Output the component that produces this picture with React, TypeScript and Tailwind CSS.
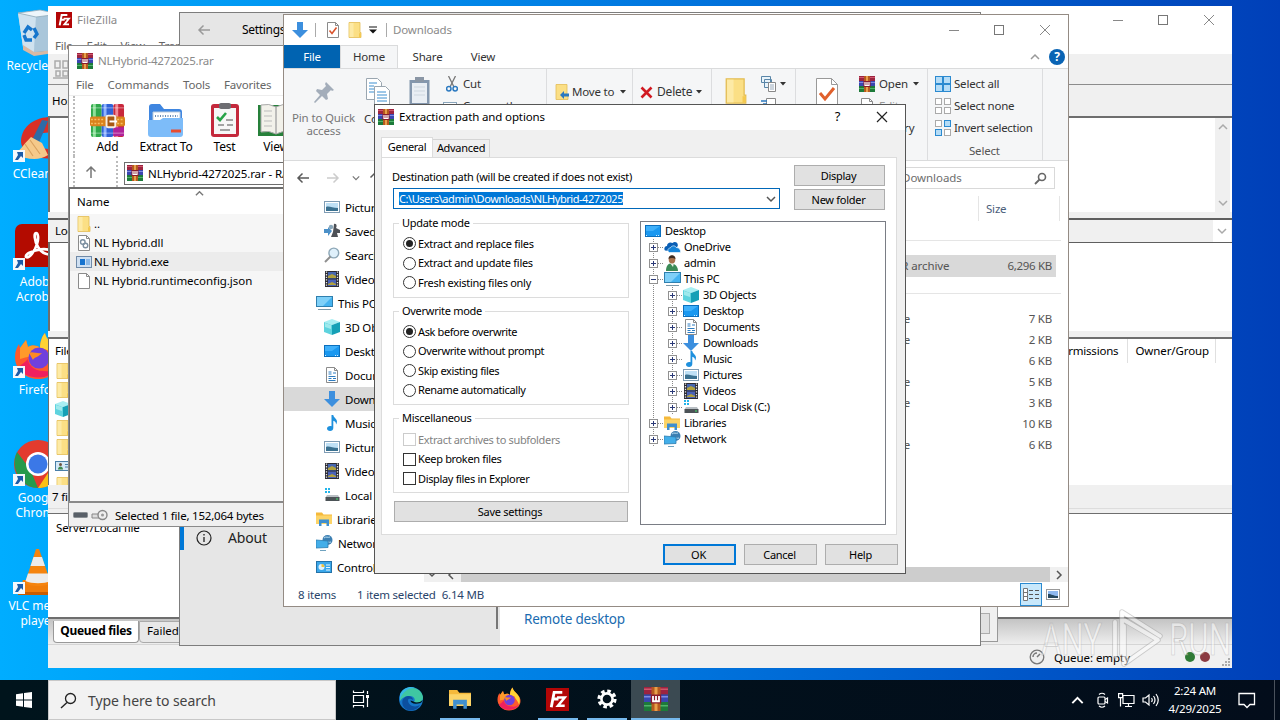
import { ReactNode } from 'react';

type IconProps = { s?: number };

/* ---------- Icons ---------- */

function RarIcon({ s = 16 }: IconProps) {
  return (
    <svg width={s} height={s} viewBox="0 0 16 16" className="shrink-0">
      <rect x="0" y="0" width="16" height="5" fill="#9c2440" />
      <rect x="0" y="1" width="16" height="1" fill="#d0566c" />
      <rect x="0" y="5" width="16" height="5" fill="#3a46b0" />
      <rect x="0" y="6" width="16" height="1" fill="#7f8ae0" />
      <rect x="0" y="10" width="16" height="6" fill="#1d7a3a" />
      <rect x="0" y="12" width="16" height="1" fill="#4fb46a" />
      <rect x="5" y="0" width="6" height="16" fill="#b5591f" />
      <rect x="7" y="0" width="2" height="16" fill="#e8a04a" />
      <rect x="4.5" y="5" width="7" height="6" fill="#8b1b2b" />
      <path d="M6 6v3.5h4V6M8 6v3" fill="none" stroke="#fff" strokeWidth="1.2" />
    </svg>
  );
}

function BooksIcon({ s = 36 }: IconProps) {
  return (
    <svg width={s} height={s} viewBox="0 0 36 36" className="shrink-0">
      <rect x="1" y="1" width="11" height="34" rx="2" fill="#2fa84a" />
      <rect x="3" y="1" width="3" height="34" fill="#8ee09a" />
      <rect x="12" y="1" width="12" height="34" rx="2" fill="#2f62d8" />
      <rect x="14" y="1" width="3" height="34" fill="#8fb4ff" />
      <rect x="24" y="1" width="11" height="34" rx="2" fill="#c8283c" />
      <rect x="26" y="1" width="3" height="34" fill="#f08a98" />
      <path d="M24 25h11v9H24z" fill="#b0229a" />
      <path d="M1 5h34M1 31h34" stroke="#ffffff" strokeOpacity=".45" />
      <rect x="0" y="14" width="36" height="10" rx="2" fill="#d9821c" />
      <path d="M1 17h14M1 21h14M28 17h7M28 21h7" stroke="#f7c062" strokeWidth="1.5" strokeDasharray="2 1.5" />
      <rect x="17" y="13" width="9" height="12" rx="1.5" fill="#a85812" stroke="#f6eee2" strokeWidth="2" />
      <path d="M20 19h8" stroke="#fff" strokeWidth="2" />
    </svg>
  );
}

function Folder({ s = 16 }: IconProps) {
  return (
    <svg width={s} height={s} viewBox="0 0 16 16" className="shrink-0">
      <path d="M2 .5h11v10h1v5H2z" fill="#fbdf85" stroke="#e3bd55" strokeWidth=".8" />
      <path d="M12 15.2v-4h2v4z" fill="#f4c94f" />
      <path d="M2.5 1h4v14h-4z" fill="#fdeaa6" />
    </svg>
  );
}

function FileDoc({ kind = 'blank' }: { kind?: string }) {
  return (
    <svg width="16" height="16" viewBox="0 0 16 16" className="shrink-0">
      <path d="M2.5.5h8l3 3v12h-11z" fill="#fff" stroke="#8b8b8b" />
      <path d="M10.5.5v3h3" fill="none" stroke="#8b8b8b" />
      {kind === 'dll' && (
        <>
          <circle cx="6.8" cy="7" r="2.3" fill="none" stroke="#7b8fa0" strokeWidth="1.4" />
          <circle cx="9.5" cy="10.5" r="2.3" fill="none" stroke="#7b8fa0" strokeWidth="1.4" />
        </>
      )}
      {kind === 'check' && <path d="M4.5 8.5l2.5 3 4.5-6" fill="none" stroke="#d9532c" strokeWidth="1.6" />}
      {kind === 'text' && <path d="M4.5 5h3M4.5 7h3M9 6h3M4.5 9.5h7M4.5 11.5h3M9 11.5h3M4.5 13.5h7" stroke="#2e7cc0" />}
    </svg>
  );
}

function ExeIcon() {
  return (
    <svg width="16" height="16" viewBox="0 0 16 16" className="shrink-0">
      <rect x=".5" y="2.5" width="15" height="11" fill="#cfe0f2" stroke="#6f8aa8" />
      <rect x="4" y="5" width="5" height="6" fill="#1673cf" />
      <path d="M10 6h4M10 8h4M10 10h4" stroke="#4a92dc" />
    </svg>
  );
}

function ContactIcon() {
  return (
    <svg width="16" height="16" viewBox="0 0 16 16" className="shrink-0">
      <rect x=".5" y="3.5" width="15" height="9" fill="#d4e9f7" stroke="#4a7fa8" />
      <circle cx="5.5" cy="6.5" r="1.5" fill="#6d5440" />
      <path d="M3 11.5c0-4 5-4 5 0z" fill="#3f8c52" />
      <path d="M10 6.5h4M10 9h4" stroke="#4a7fa8" />
    </svg>
  );
}

function DesktopIcon({ s = 16 }: IconProps) {
  return (
    <svg width={s} height={s} viewBox="0 0 16 16" className="shrink-0">
      <rect x=".5" y="2.5" width="15" height="11" fill="#1a98f0" stroke="#0b6fbd" />
      <path d="M1 3h14L8 8H1z" fill="#3fb0fa" />
      <path d="M1 12.5h2M11 12.5h4" stroke="#d4ecff" strokeDasharray="1 1" />
    </svg>
  );
}

function PcIcon() {
  return (
    <svg width="17" height="16" viewBox="0 0 17 16" className="shrink-0">
      <rect x=".5" y="1.5" width="16" height="10" fill="#45b3f0" stroke="#2f7fae" />
      <path d="M1 2h15L7 11H1z" fill="#7fd0f8" />
      <path d="M2 14.5h13" stroke="#7b98a8" />
    </svg>
  );
}

function CubeIcon() {
  return (
    <svg width="16" height="16" viewBox="0 0 16 16" className="shrink-0">
      <path d="M8 0l8 3-8 3-8-3z" fill="#a8eef2" />
      <path d="M0 3l8 3v10l-8-3z" fill="#5ed3de" />
      <path d="M16 3L8 6v10l8-3z" fill="#15a0b6" />
      <path d="M1 4l6 2v4l-6-2z" fill="#9fe9ec" />
    </svg>
  );
}

function DownIcon({ s = 16 }: IconProps) {
  return (
    <svg width={s} height={s} viewBox="0 0 16 16" className="shrink-0">
      <path d="M5 0h6v8h5l-8 8-8-8h5z" fill="#3c8fde" />
    </svg>
  );
}

function MusicIcon() {
  return (
    <svg width="16" height="16" viewBox="0 0 16 16" className="shrink-0">
      <path d="M7.500 0h1.800c.3 3 3.700 3.600 3.700 6.500 0 1.200-.4 2.200-1 3 .2-2.300-1-3.300-2.700-3.800V13c0 1.700-1.400 3-3.200 3C4.300 16 3 15 3 13.600s1.500-2.600 3.200-2.600c.5 0 .9.100 1.300.300z" fill="#1e90dd" />
    </svg>
  );
}

function PictureIcon() {
  return (
    <svg width="16" height="16" viewBox="0 0 16 16" className="shrink-0">
      <rect x=".5" y="2.5" width="15" height="11" fill="#fff" stroke="#7f9cb4" />
      <rect x="2" y="4" width="12" height="8" fill="#bfe0f5" />
      <path d="M2 8c3-1.500 6 1 12 1v3H2z" fill="#3b7190" />
    </svg>
  );
}

function VideoIcon() {
  return (
    <svg width="16" height="16" viewBox="0 0 16 16" className="shrink-0">
      <rect x="1" y="0" width="14" height="16" fill="#2c2c34" />
      <rect x="4" y="1" width="8" height="6.5" fill="#4767b0" />
      <rect x="4" y="8.5" width="8" height="6.5" fill="#4a62b8" />
      <path d="M4 5l4-2 4 2v2H4zM4 13l4-2 4 2v1H4z" fill="#b0a13e" />
      <path d="M2.5.5v15M13.5.5v15" stroke="#e8e8e8" strokeWidth="1.3" strokeDasharray="1.3 1.3" />
    </svg>
  );
}

function DiskIcon() {
  return (
    <svg width="16" height="16" viewBox="0 0 16 16" className="shrink-0">
      <path d="M1 1h2v2H1zM4 1h2v2H4zM1 4h2v2H1zM4 4h2v2H4z" fill="#22b4ea" />
      <path d="M3 8h11l1.500 2.500h-14z" fill="#b9bfc4" />
      <rect x="1.5" y="10" width="14" height="4" fill="#4c5357" />
      <rect x="12" y="11.5" width="2" height="1" fill="#3fe36b" />
    </svg>
  );
}

function LibraryIcon({ s = 16 }: IconProps) {
  return (
    <svg width={s} height={s} viewBox="0 0 16 16" className="shrink-0">
      <path d="M0 1.500h6l1.500 2H16V13H0z" fill="#f5b93b" />
      <path d="M0 4.500h16V13H0z" fill="#fcd468" />
      <path d="M3 8.500h10V15h-2.500v-3h-5v3H3z" fill="#3f8fcf" />
    </svg>
  );
}

function NetworkIcon() {
  return (
    <svg width="17" height="16" viewBox="0 0 17 16" className="shrink-0">
      <circle cx="11.5" cy="5" r="5" fill="#3c7fb2" />
      <path d="M8 3c2-2 4 0 6-1M9 7c3-1 4 1 6 0" stroke="#b9def2" fill="none" />
      <path d="M0 5l12 1v6.500L0 13z" fill="#43aee9" stroke="#2b7cb0" strokeWidth=".8" />
      <path d="M4 15.500h6" stroke="#6fa2bf" />
    </svg>
  );
}

function ControlIcon() {
  return (
    <svg width="16" height="16" viewBox="0 0 16 16" className="shrink-0">
      <rect x=".5" y="2.5" width="15" height="11" fill="#3aa7ea" stroke="#2472a8" />
      <circle cx="5.5" cy="8" r="3" fill="#dff2ff" />
      <path d="M5.500 8V5a3 3 0 013 3z" fill="#f2c13a" />
      <path d="M10 6h4M10 8.500h4M10 11h4" stroke="#e8f6ff" />
    </svg>
  );
}

function OneDriveIcon() {
  return (
    <svg width="17" height="16" viewBox="0 0 17 16" className="shrink-0">
      <path d="M1 11.500C-.5 9.500.8 7 3 7c0-3 3-4.500 5.500-3C11 1.500 15 4 13.500 7.500L6 12z" fill="#0a5fb5" />
      <path d="M5.500 13.500c-2.500-1-2-4.500.8-4.500 1-2.500 4.700-3 6-.5 2.500 0 4.700 2 4.200 5z" fill="#1483d8" stroke="#fff" strokeWidth=".6" />
    </svg>
  );
}

function UserIcon() {
  return (
    <svg width="16" height="16" viewBox="0 0 16 16" className="shrink-0">
      <path d="M2 16c0-5 2-7.500 5-7.500 4 0 7 3 7 7.500z" fill="#3c8b57" />
      <path d="M6 8h4l-1 4z" fill="#eef3ea" />
      <ellipse cx="8" cy="4.5" rx="3.3" ry="4" fill="#a8714c" />
      <path d="M4.500 4c0-5 7-5 7 0-2-1.500-5-1.500-7 0z" fill="#3e2c22" />
    </svg>
  );
}

function SavedIcon() {
  return (
    <svg width="16" height="16" viewBox="0 0 16 16" className="shrink-0">
      <path d="M0 6h4V4l4 4-4 5v-3H0z" fill="#4b90c8" />
      <path d="M10 1c3-1 3 3 2 4l4 2v3h-3l1 4H7l2-5z" fill="#4d5157" />
      <circle cx="7" cy="4" r="2.2" fill="#8aa7ba" />
    </svg>
  );
}

function SearchesIcon() {
  return (
    <svg width="16" height="16" viewBox="0 0 16 16" className="shrink-0">
      <circle cx="9.8" cy="6" r="4.9" fill="#dff0fb" stroke="#8da7b7" strokeWidth="1.4" />
      <path d="M6.500 9.500L1 15" stroke="#8f8f8f" strokeWidth="2" />
    </svg>
  );
}

function FirefoxIcon({ s }: { s: number }) {
  return (
    <svg width={s} height={s} viewBox="0 0 48 48" className="shrink-0">
      <path d="M24 47C11 47 1 37 1 25c0-6 2-10 4-13l1 4c2-3 4-5 6-8l2 7c4-2 9-2 12 1 0-6 2-12 5-15 1 6 6 9 10 14 4 4 6 8 6 13 0 11-10 19-23 19z" fill="#ff5a2b" />
      <path d="M31 1c1 6 6 9 10 14 5 6 6 13 3 20-2-7-7-10-9-16-6-3-9-3-9-3 0-6 2-12 5-15z" fill="#ffd334" />
      <path d="M6 16c2-3 4-5 6-8l2 7c4-2 9-2 12 1l-8 6c-3 4-7 3-12 5z" fill="#ff9a2a" />
      <path d="M4 35c6 13 32 15 40 0-3 3-8 5-14 4-12 0-16-8-16-12-4 4-7 6-10 8z" fill="#f0205f" />
      <circle cx="25" cy="26" r="10.5" fill="#7040dd" />
      <path d="M15 21c3-2 8 1 13 0-3 4-8 4-9 7z" fill="#ff8a22" />
    </svg>
  );
}

function FileZillaIcon({ s }: { s: number }) {
  return (
    <svg width={s} height={s} viewBox="0 0 24 24" className="shrink-0">
      <rect width="24" height="24" fill="#b30606" />
      <path d="M5.500 20L8.500 4.500H17M7 11.500h6" fill="none" stroke="#fff" strokeWidth="3" />
      <path d="M11.500 10h8L12.500 18.500h7" fill="none" stroke="#fff" strokeWidth="2.6" />
    </svg>
  );
}

function RecycleBin() {
  return (
    <svg width="48" height="48" viewBox="0 0 48 48">
      <path d="M4 5l22-3 20 4-5 36-23 2-9-5z" fill="#bcd6e8" />
      <path d="M4 5l18 4-2 35-11-5z" fill="#cfe2ef" />
      <path d="M22 9l24-3-5 36-21 2z" fill="#a9c6da" />
      <path d="M4 5l22-3 20 4-24 3z" fill="#eef6fb" stroke="#8fa9b8" strokeWidth=".8" />
      <path d="M9 37l11 7 21-2-1 3-20 3-11-6z" fill="#d8b9a4" />
      <path d="M10 25l4-6 4 3M20 20l3 6-3 4M18 32h-6l-2-5" fill="none" stroke="#1676cc" strokeWidth="3.4" />
    </svg>
  );
}

function CCleaner() {
  return (
    <svg width="48" height="48" viewBox="0 0 48 48">
      <path d="M46 2C28-2 8 6 7 25c0 12 16 20 39 17V31c-12 4-22 2-24-7 0-7 12-10 24-5z" fill="#d92f26" />
      <path d="M28 4l6 1-10 24-7-3z" fill="#2e6ba6" />
      <path d="M17 21l11 6 6 12c-9 6-20 5-34-1 6-3 9-9 17-17z" fill="#f5c98a" />
      <path d="M11 28l8 12M16 24l10 14" stroke="#d9a260" strokeWidth="1.2" />
    </svg>
  );
}

function Acrobat() {
  return (
    <svg width="48" height="48" viewBox="0 0 48 48">
      <rect x="1" width="47" height="43" rx="7" fill="#b30b00" />
      <path d="M12 33c3 2 9-6 11-13 2-6 1-11-1-11s-2 7 2 14c4 7 12 9 14 6s-7-5-14-3c-6 1-13 4-12 7z" fill="none" stroke="#fff" strokeWidth="2.7" />
    </svg>
  );
}

function Chrome() {
  return (
    <svg width="48" height="48" viewBox="0 0 48 48">
      <circle cx="24" cy="24" r="24" fill="#e33b2e" />
      <path d="M3 12l13 17 8 19C8 48-5 29 3 12z" fill="#259a4b" />
      <path d="M24 48l12-18 2-14h9c4 17-6 32-23 32z" fill="#fbc116" />
      <circle cx="24" cy="24" r="12" fill="#fff" />
      <circle cx="24" cy="24" r="9.5" fill="#3b78e7" />
    </svg>
  );
}

function Vlc() {
  return (
    <svg width="48" height="48" viewBox="0 0 48 48">
      <path d="M9 32h32l5 14H4z" fill="#f07d0a" />
      <path d="M4 44h42v3H4z" fill="#c95c00" />
      <path d="M22 1h3l12 34c-4 4-22 4-26 0z" fill="#f5840f" />
      <path d="M19.500 9h8.500l3 9H16.500zM14 25.500h20l2.500 7.500c-6 3-19 3-25 0z" fill="#ececec" />
    </svg>
  );
}

function Edge() {
  return (
    <svg width="24" height="24" viewBox="0 0 24 24">
      <circle cx="12" cy="12" r="12" fill="#1677c8" />
      <path d="M1 8C4-2 22-2 24 10c0 5-4 7-9 5 2-2 0-6-4-6-5 0-8 2-10 5z" fill="#3fc7a2" />
      <path d="M1 8C4 0 12-1 16 1c-6 0-12 3-15 11z" fill="#35b8e8" />
      <path d="M9 13c0 6 7 8 12 5-3 6-13 8-17 1-2-5 0-9 5-10 3 0 5 2 5 4-2-1-4-2-5 0z" fill="#0c4f9e" />
      <path d="M11.500 13.500c0 2.500 4 4.500 10 2.500 1.500-.8 2-2 2-3-3 3-7 3-9 1.500z" fill="#00141c" />
    </svg>
  );
}

function Gear() {
  return (
    <svg width="22" height="22" viewBox="0 0 22 22">
      <circle cx="11" cy="11" r="8" fill="none" stroke="#fff" strokeWidth="3.2" strokeDasharray="3.6 2.683" />
      <circle cx="11" cy="11" r="5.6" fill="none" stroke="#fff" strokeWidth="2.6" />
    </svg>
  );
}

function Shortcut() {
  return (
    <svg width="12" height="12" viewBox="0 0 12 12" className="absolute bottom-[2px] left-[-1px]">
      <rect width="12" height="12" fill="#f4f8fc" />
      <path d="M4 2h6v6L8 6 5 10H2l3-5z" fill="#1c5ca8" />
    </svg>
  );
}

function Caret() {
  return (
    <svg width="6" height="4" viewBox="0 0 6 4" className="shrink-0">
      <path d="M0 0h6L3 3.500z" fill="#333" />
    </svg>
  );
}

function Chevron({ dir, color = '#555', w = 10 }: { dir: 'up' | 'down' | 'left' | 'right'; color?: string; w?: number }) {
  const paths = { up: 'M1 7l4-4 4 4', down: 'M1 3l4 4 4-4', left: 'M7 1L3 5l4 4', right: 'M3 1l4 4-4 4' };
  return (
    <svg width={w} height={w} viewBox="0 0 10 10" className="shrink-0">
      <path d={paths[dir]} fill="none" stroke={color} strokeWidth="1.5" />
    </svg>
  );
}

function Arrow({ dir = 'left', color = '#5a5a5a' }: { dir?: 'left' | 'right' | 'up'; color?: string }) {
  const paths = { left: 'M13 7H2M6.5 2.5L2 7l4.5 4.5', right: 'M1 7h11M7.5 2.5L12 7l-4.5 4.5', up: 'M7 13V2M2.5 6.5L7 2l4.5 4.5' };
  return (
    <svg width="14" height="14" viewBox="0 0 14 14" className="shrink-0">
      <path d={paths[dir]} fill="none" stroke={color} strokeWidth="1.5" />
    </svg>
  );
}

function CaptionButtons() {
  return (
    <div className="flex items-center gap-[34px]">
      <svg width="12" height="12" viewBox="0 0 12 12"><path d="M2 6.500h10" stroke="#888" /></svg>
      <svg width="12" height="12" viewBox="0 0 12 12"><rect x="1.5" y="1.5" width="9" height="9" fill="none" stroke="#777" /></svg>
      <svg width="12" height="12" viewBox="0 0 12 12"><path d="M1 1l10 10M11 1L1 11" stroke="#888" /></svg>
    </div>
  );
}

/* ---------- Desktop ---------- */

const shortcuts = [
  { label: ['Recycle Bin'], icon: <RecycleBin />, arrow: false },
  { label: ['CCleaner'], icon: <CCleaner />, arrow: true },
  { label: ['Adobe', 'Acrobat'], icon: <Acrobat />, arrow: true },
  { label: ['Firefox'], icon: <FirefoxIcon s={48} />, arrow: true },
  { label: ['Google', 'Chrome'], icon: <Chrome />, arrow: true },
  { label: ['VLC media', 'player'], icon: <Vlc />, arrow: true },
];

function DesktopShortcuts() {
  return (
    <div className="flex w-[76px] flex-col">
      {shortcuts.map((item) => (
        <div key={item.label[0]} className="flex h-[108px] flex-col items-center pt-[8px]">
          <div className="relative h-[48px] w-[48px]">
            {item.icon}
            {item.arrow && <Shortcut />}
          </div>
          <div className="mt-[2px] text-center text-[12px] leading-[15px] whitespace-nowrap text-white">
            {item.label.map((line) => (
              <p key={line}>{line}</p>
            ))}
          </div>
        </div>
      ))}
    </div>
  );
}

/* ---------- FileZilla ---------- */

function FileZillaWindow() {
  return (
    <div className="absolute top-[6px] left-[48px] flex h-[662px] w-[1184px] flex-col bg-[#f0f0f0] text-[11.5px] tracking-[-0.2px]">
      <div className="flex h-[28px] items-center justify-between bg-white pr-[17px] pl-[8px] text-[#8a8a8a]">
        <div className="flex items-center gap-[5px]">
          <FileZillaIcon s={16} />
          <span className="tracking-normal">FileZilla</span>
        </div>
        <CaptionButtons />
      </div>
      <div className="flex h-[20px] items-center gap-[14px] bg-white pt-[4px] pl-[7px] text-[#666]">
        <span>File</span>
        <span>Edit</span>
        <span>View</span>
        <span>Transfer</span>
      </div>
      <div className="flex h-[31px] items-center border-b border-[#8c8c8c] pl-[5px]">
        <svg width="18" height="20" viewBox="0 0 18 20">
          <path d="M2 2h5v7H2zM10 2h5v7h-5zM3 12h4v5H3zM10 12h5v5h-5zM0 19h17" fill="none" stroke="#aaa" strokeWidth="1.5" />
        </svg>
      </div>
      <div className="flex h-[33px] items-center border-b-2 border-[#6e6e6e] pl-[4px] tracking-normal">Host:</div>
      <div className="flex h-[94px] justify-end border-l-2 border-[#6e6e6e] bg-white pr-[2px]">
        <div className="flex w-[15px] flex-col items-center justify-between bg-[#f0f0f0] py-[4px]">
          <Chevron dir="up" color="#aaa" />
          <Chevron dir="down" color="#aaa" />
        </div>
      </div>
      <div className="h-[6px]" />
      <div className="flex h-[25px] items-center justify-between border-t-2 border-b border-[#5f5f5f] pr-px pl-[7px]">
        <span>Local site:</span>
        <div className="flex h-full w-[18px] items-center justify-center bg-white">
          <Chevron dir="down" color="#aaa" />
        </div>
      </div>
      <div className="h-[88px] border-l-2 border-[#6e6e6e] bg-white" />
      <div className="h-[6px]" />
      <div className="flex h-[148px] flex-col overflow-hidden border-t-2 border-l border-[#6e6e6e] bg-white pl-[6px]">
        <div className="flex h-[24px] shrink-0 items-center">
          <span>Filename</span>
          <div className="ml-auto flex h-full items-center pr-[16px]">
            <span className="border-r border-[#e0e0e0] pr-[9px] leading-[24px]">Permissions</span>
            <span className="border-r border-[#e0e0e0] pr-[6px] pl-[7px] leading-[24px] tracking-[-0.1px]">Owner/Group</span>
          </div>
        </div>
        <div className="flex flex-col gap-[3px]">
          <Folder />
          <Folder />
          <CubeIcon />
          <Folder />
          <Folder />
          <ContactIcon />
          <Folder />
        </div>
      </div>
      <div className="flex h-[24px] items-center border-b border-[#ddd] pl-[4px]">7 files</div>
      <div className="h-[4px]" />
      <div className="flex h-[106px] flex-col border-t border-b-2 border-[#6e6e6e] bg-white pt-[5px] pl-[8px] leading-[18px] tracking-[-0.15px]">
        Server/Local file
      </div>
      <div className="flex h-[26px] border-b border-[#d5d5d5] bg-linear-to-b from-[#c4c4c4] to-[#eee] pt-[2px] pl-[5px]">
        <div className="flex h-[22px] w-[86px] items-center justify-center rounded-b-sm border border-t-0 border-[#999] bg-white pb-[2px] text-[12px] font-bold tracking-[-0.3px] whitespace-nowrap">Queued files</div>
        <div className="flex h-[22px] w-[110px] items-center rounded-b-sm border border-[#aaa] bg-[#e8e8e8] pb-[2px] pl-[7px] tracking-normal">Failed</div>
      </div>
      <div className="flex flex-1 items-center justify-end pr-px">
        <svg width="16" height="16" viewBox="0 0 16 16">
          <circle cx="8" cy="8" r="6.8" fill="#eee" stroke="#777" strokeWidth="1.3" />
          <path d="M8 8l3-3M4 8a4 4 0 014-4" stroke="#777" fill="none" strokeWidth="1.5" />
        </svg>
        <span className="mr-[55px] ml-[9px] pt-[2px] tracking-[-0.05px]">Queue: empty</span>
        <span className="mr-[5px] h-[10px] w-[10px] rounded-full bg-[#2f7a35]" />
        <span className="h-[10px] w-[10px] rounded-full bg-[#8b3b42]" />
        <svg width="10" height="10" viewBox="0 0 10 10" className="mb-px ml-[11px] self-end">
          <path d="M7 2h2M4 5h2M7 5h2M1 8h2M4 8h2M7 8h2" stroke="#aaa" strokeWidth="2" />
        </svg>
      </div>
    </div>
  );
}

function Watermark() {
  return (
    <div className="absolute top-[606px] left-[1038px] h-[66px] w-[194px] overflow-hidden opacity-50">
      <svg width="196" height="66" viewBox="0 0 196 66">
        <g fill="none" strokeLinejoin="round" strokeLinecap="round">
          <path d="M77 16v34M84 48V6l38 24M86 20v38l34-24L86 14" stroke="#a5a5a5" strokeWidth="5.5" />
          <path d="M77 16v34M84 48V6l38 24M86 20v38l34-24L86 14" stroke="#fff" strokeWidth="3.8" />
        </g>
        <g fill="#fff" stroke="#a5a5a5" strokeWidth=".7" fontFamily="Roboto, sans-serif" fontWeight="400" fontSize="45">
          <text x="3" y="49" textLength="61" lengthAdjust="spacingAndGlyphs">ANY</text>
          <text x="131" y="49" textLength="62" lengthAdjust="spacingAndGlyphs">RUN</text>
        </g>
      </svg>
    </div>
  );
}

/* ---------- Settings ---------- */

function SettingsWindow() {
  return (
    <>
      <div className="absolute top-[560px] left-[900px] flex h-[82px] w-[98px] items-end justify-end border border-[#999] bg-[#f0f0f0] pr-[7px] pb-[7px]">
        <div className="h-[21px] w-[60px] border border-[#adadad] bg-[#e1e1e1]" />
      </div>
      <div className="absolute top-[12px] left-[179px] flex h-[634px] w-[802px] border border-[#7d7d7d] bg-white">
        <div className="flex w-[320px] flex-col bg-[#e6e6e6]">
          <div className="flex h-[33px] items-center pl-[17px] text-[12px]">
            <Arrow color="#9a9a9a" />
            <span className="ml-[31px] tracking-[-0.3px]">Settings</span>
          </div>
          <div className="mt-[480px] flex h-[24px] items-center border-l-4 border-[#0078d7] pl-[12px] text-[14px] text-[#222]">
            <svg width="16" height="16" viewBox="0 0 16 16">
              <circle cx="8" cy="8" r="7" fill="none" stroke="#222" strokeWidth="1.2" />
              <path d="M8 7v5M8 4v1.500" stroke="#222" strokeWidth="1.3" />
            </svg>
            <span className="mb-px ml-[16px] tracking-[-0.2px]">About</span>
          </div>
          <div className="mt-auto mr-[2px] mb-[16px] h-[40px] w-[2px] self-end bg-[#777]" />
        </div>
        <div className="flex flex-col justify-end pb-[16px] pl-[24px] text-[13.5px] tracking-[-0.2px] text-[#1a6bb0]">Remote desktop</div>
      </div>
    </>
  );
}

/* ---------- WinRAR ---------- */

const rarFiles = [
  { name: '..', icon: <Folder /> },
  { name: 'NL Hybrid.dll', icon: <FileDoc kind="dll" /> },
  { name: 'NL Hybrid.exe', icon: <ExeIcon />, selected: true },
  { name: 'NL Hybrid.runtimeconfig.json', icon: <FileDoc /> },
];

function RarTool({ label, width, children }: { label: string; width: string; children: ReactNode }) {
  return (
    <div className={`flex shrink-0 flex-col items-center whitespace-nowrap ${width}`}>
      {children}
      <span className="leading-[17px] tracking-[-0.2px]">{label}</span>
    </div>
  );
}

function WinRarWindow() {
  return (
    <div className="absolute top-[45px] left-[68px] flex h-[482px] w-[300px] flex-col border border-[#8a8a8a] bg-white text-[11.5px] tracking-[-0.2px]">
      <div className="flex h-[29px] items-center gap-[5px] pl-[8px] text-[#8a8a8a]">
        <RarIcon />
        <span>NLHybrid-4272025.rar</span>
      </div>
      <div className="flex h-[21px] items-center gap-[14px] border-b border-[#eee] pl-[7px] text-[#666]">
        <span>File</span>
        <span className="tracking-[-0.05px]">Commands</span>
        <span>Tools</span>
        <span>Favorites</span>
      </div>
      <div className="ml-[4px] flex h-[60px] overflow-hidden border-l-2 border-dotted border-[#bbb] pt-[7px] text-[12px]">
        <RarTool label="Add" width="w-[65px]"><BooksIcon s={35} /></RarTool>
        <RarTool label="Extract To" width="w-[52px]">
          <svg width="36" height="35" viewBox="0 0 36 35" className="shrink-0">
            <path d="M1 4q0-3 3-3h8l4 5h15q3 0 3 3v20H1z" fill="#3f86e0" />
            <path d="M5 9h27v10H5z" fill="#fff" stroke="#bcd" />
            <path d="M7 13h23" stroke="#6b8db5" strokeWidth="2" strokeDasharray="1 1.5" />
            <path d="M0 17h12l3-2h20v16q0 3-3 3H3q-3 0-3-3z" fill="#7dbcf9" />
            <path d="M23 28h10" stroke="#e84c30" strokeWidth="3" />
          </svg>
        </RarTool>
        <RarTool label="Test" width="w-[65px]">
          <svg width="28" height="35" viewBox="0 0 28 35" className="shrink-0">
            <rect x="0" y="1" width="28" height="33" rx="3" fill="#c4293c" />
            <rect x="3" y="5" width="22" height="26" fill="#f7f7f7" />
            <rect x="8" y="0" width="12" height="6" rx="2" fill="#6d6d72" />
            <path d="M6 14l3 3 6-7" stroke="#27a348" strokeWidth="2.6" fill="none" />
            <path d="M15 17h7M7 22h6M16 22h6M9 27h10" stroke="#888" strokeWidth="1.3" />
          </svg>
        </RarTool>
        <RarTool label="View" width="w-[38px]">
          <svg width="36" height="35" viewBox="0 0 36 35" className="shrink-0">
            <path d="M0 2h36v31H0z" fill="#26803a" />
            <path d="M3 2q8-2 15 2v27q-7-4-15-2zM33 2q-8-2-15 2v27q7-4 15-2z" fill="#f2f1ea" stroke="#aaa" />
            <path d="M6 8h8M6 13h8M6 18h8M6 23h8" stroke="#bbb" />
            <path d="M25 1h5v12l-2.500-3-2.500 3z" fill="#c4293c" />
          </svg>
        </RarTool>
      </div>
      <div className="ml-[4px] flex h-[31px] items-center border-l-2 border-dotted border-[#bbb] pl-[9px]">
        <Arrow dir="up" color="#777" />
        <div className="ml-[18px] h-full border-l-2 border-dotted border-[#bbb]" />
        <div className="mt-[3px] ml-[6px] flex h-[23px] flex-1 items-center gap-[5px] border border-[#6e6e6e] pl-[2px] whitespace-nowrap">
          <RarIcon />
          <span className="pt-px tracking-[-0.1px]">NLHybrid-4272025.rar - RAR archive</span>
        </div>
      </div>
      <div className="flex h-[27px] items-center border-t-2 border-l border-[#6e6e6e] pl-[7px]">
        <span className="tracking-normal">Name</span>
        <span className="mb-[16px] ml-[86px]"><Chevron dir="up" color="#777" w={9} /></span>
      </div>
      <div className="flex flex-1 flex-col border-l border-[#6e6e6e] bg-[#f6f6f6]">
        {rarFiles.map((file) => (
          <div key={file.name} className={`flex h-[19px] items-center pl-[6px] tracking-[-0.05px] ${file.selected ? 'bg-[#ececec]' : ''}`}>
            {file.icon}
            <span className="ml-[2px]">{file.name}</span>
          </div>
        ))}
      </div>
      <div className="flex h-[25px] items-center border-t-2 border-[#8a8a8a] bg-[#f0f0f0] pl-[4px]">
        <svg width="36" height="12" viewBox="0 0 36 12">
          <rect x=".5" y="3.5" width="14" height="5" rx="1" fill="#596068" stroke="#8a9094" />
          <path d="M19 5h8v4h-8z" fill="#ddd" stroke="#888" />
          <circle cx="29.5" cy="6" r="4.5" fill="#eee" stroke="#888" strokeWidth="1.4" />
          <circle cx="29.5" cy="6" r="1.5" fill="#999" />
        </svg>
        <span className="ml-[6px] pt-[2px]">Selected 1 file, 152,064 bytes</span>
      </div>
    </div>
  );
}

/* ---------- Explorer ---------- */

const navItems = [
  { label: 'Pictures', icon: <PictureIcon />, deep: true },
  { label: 'Saved Games', icon: <SavedIcon />, deep: true },
  { label: 'Searches', icon: <SearchesIcon />, deep: true },
  { label: 'Videos', icon: <VideoIcon />, deep: true },
  { label: 'This PC', icon: <PcIcon />, deep: false },
  { label: '3D Objects', icon: <CubeIcon />, deep: true },
  { label: 'Desktop', icon: <DesktopIcon />, deep: true },
  { label: 'Documents', icon: <FileDoc kind="text" />, deep: true },
  { label: 'Downloads', icon: <DownIcon />, deep: true, selected: true },
  { label: 'Music', icon: <MusicIcon />, deep: true },
  { label: 'Pictures', icon: <PictureIcon />, deep: true },
  { label: 'Videos', icon: <VideoIcon />, deep: true },
  { label: 'Local Disk', icon: <DiskIcon />, deep: true },
  { label: 'Libraries', icon: <LibraryIcon />, deep: false },
  { label: 'Network', icon: <NetworkIcon />, deep: false },
  { label: 'Control', icon: <ControlIcon />, deep: false },
];

const fileRows = [
  { type: 'e', size: '7 KB' },
  { type: 'e', size: '2 KB' },
  { type: '', size: '6 KB' },
  { type: 'e', size: '5 KB' },
  { type: 'e', size: '3 KB' },
  { type: '', size: '10 KB' },
  { type: 'e', size: '6 KB' },
];

function SelectIcon({ fills }: { fills: boolean[] }) {
  return (
    <div className={`grid h-[16px] w-[16px] grid-cols-2 ${fills[0] ? 'gap-0' : 'gap-[2px]'}`}>
      {fills.map((on, i) => (
        <div key={i} className={on ? 'border border-[#2b8ad0] bg-[#b5dcf6]' : 'border border-[#aaa] bg-white'} />
      ))}
    </div>
  );
}

function Ribbon() {
  return (
    <div className="flex h-[93px] border-y border-[#dadbdc] bg-[#f5f6f7] whitespace-nowrap text-[#333]">
      <div className="flex w-[79px] flex-col items-center pt-[11px] leading-[13px] tracking-[-0.15px] text-[#777]">
        <svg width="24" height="24" viewBox="0 0 24 24" className="shrink-0">
          <path d="M14 2l8 8-2 1-1-1-4 4 1 5-2 1-4-4-7 7-1-1 6-7-4-4 1-2 5 1 4-4-1-2z" fill="#a3adba" />
        </svg>
        <span className="mt-[7px]">Pin to Quick</span>
        <span>access</span>
      </div>
      <div className="flex w-[34px] flex-col items-center pt-[9px] leading-[13px]">
        <svg width="26" height="30" viewBox="0 0 26 30" className="ml-[-4px] shrink-0">
          <path d="M1.500.5h11l4 4v17h-15z" fill="#fff" stroke="#9aa6b0" />
          <path d="M9.500 8.500h11l4 4v17h-15z" fill="#fff" stroke="#9aa6b0" />
          <path d="M4 5h8M4 8h5M4 11h5M4 14h5M12 14h9M12 17h10M12 20h10M12 23h10" stroke="#3d8fd0" />
        </svg>
        <span className="mt-[4px] ml-[-6px]">Copy</span>
      </div>
      <div className="w-[48px] pt-[8px] pl-[12px]">
        <svg width="21" height="28" viewBox="0 0 21 28">
          <rect x=".5" y="3" width="20" height="26" fill="#8497ae" />
          <rect x="3" y="6" width="15" height="20" fill="#e9eef4" />
          <rect x="6" y="0" width="9" height="5" fill="#8a96a5" />
          <path d="M5 10h11M5 14h11M5 18h11" stroke="#cdd6df" />
        </svg>
      </div>
      <div className="flex w-[102px] flex-col border-r border-[#dcdddf] pt-[4px] pl-px">
        <div className="flex h-[22px] shrink-0 items-center gap-[5px]">
          <svg width="12" height="16" viewBox="0 0 12 16">
            <path d="M2.500 0L8 11M9.500 0L4 11" stroke="#777" strokeWidth="1.3" />
            <circle cx="2.8" cy="12.8" r="2.2" fill="none" stroke="#2b79c0" strokeWidth="1.5" />
            <circle cx="9.2" cy="12.8" r="2.2" fill="none" stroke="#2b79c0" strokeWidth="1.5" />
          </svg>
          <span>Cut</span>
        </div>
        <div className="flex h-[22px] shrink-0 items-center gap-[6px]">
          <svg width="14" height="8" viewBox="0 0 14 8" className="ml-[-3px]"><rect x=".5" y=".5" width="13" height="7" fill="#fff" stroke="#8aa5bb" /></svg>
          <span className="tracking-[-0.1px]">Copy path</span>
        </div>
      </div>
      <div className="flex h-[46px] w-[86px] items-center border-r border-[#dcdddf] pl-[8px]">
        <svg width="16" height="16" viewBox="0 0 16 16" className="shrink-0">
          <path d="M1 .5h11v10h1v5H1z" fill="#fbdf85" stroke="#e3bd55" strokeWidth=".8" />
          <path d="M5 11l4-4v2.500h5v3H9V15z" fill="#2b79c0" />
        </svg>
        <span className="mr-[6px] ml-px">Move to</span>
        <Caret />
      </div>
      <div className="flex h-[46px] w-[79px] items-center border-r border-[#dcdddf] pl-[7px]">
        <svg width="13" height="13" viewBox="0 0 13 13"><path d="M1.500 1.500l10 10M11.500 1.500l-10 10" stroke="#d11a22" strokeWidth="2.6" /></svg>
        <span className="mr-[4px] ml-[4px] text-[12px]">Delete</span>
        <Caret />
      </div>
      <div className="flex w-[84px] border-r border-[#dcdddf] pt-[9px] pl-[11px]">
        <Folder s={26} />
        <div className="mt-[-2px] ml-[12px] flex flex-col gap-[6px]">
          <div className="flex items-center gap-[3px]">
            <svg width="16" height="16" viewBox="0 0 16 16">
              <path d="M.5.5h9v6h-9zM3.500 3.500h7v8h-7z" fill="#e9f4fb" stroke="#5a86a8" />
              <path d="M7.500 6.500h7v9h-7z" fill="#fff" stroke="#888" />
              <path d="M9 9h4M9 11h4M9 13h4" stroke="#9ab" />
            </svg>
            <Caret />
          </div>
          <svg width="16" height="12" viewBox="0 0 16 12"><path d="M5.500.5h9v11h-9z" fill="#fff" stroke="#888" /><path d="M0 3h6M2 6h4" stroke="#2b79c0" strokeWidth="1.6" /></svg>
        </div>
      </div>
      <div className="flex w-[132px] border-r border-[#dcdddf] pt-[4px] pl-[20px]">
        <svg width="22" height="28" viewBox="0 0 22 28" className="mt-[5px] shrink-0">
          <path d="M.5.5h15l6 6v21H.5z" fill="#fff" stroke="#999" />
          <path d="M15.500.5v6h6" fill="none" stroke="#999" />
          <path d="M4 15l5 6 9-11" fill="none" stroke="#e0602c" strokeWidth="3" />
        </svg>
        <div className="ml-[21px] flex flex-col">
          <div className="flex h-[22px] shrink-0 items-center">
            <RarIcon />
            <span className="mr-[5px] ml-[4px]">Open</span>
            <Caret />
          </div>
          <div className="flex h-[22px] shrink-0 items-center gap-[4px] text-[#999]">
            <FileDoc />
            <span>Edit</span>
          </div>
          <div className="flex h-[22px] shrink-0 items-center pl-[18px]">History</div>
        </div>
      </div>
      <div className="flex w-[115px] flex-col border-r border-[#dcdddf] pt-[4px] pl-[7px]">
        <div className="flex h-[22px] shrink-0 items-center gap-[3px]">
          <SelectIcon fills={[true, true, true, true]} />
          <span>Select all</span>
        </div>
        <div className="flex h-[22px] shrink-0 items-center gap-[3px]">
          <SelectIcon fills={[false, false, false, false]} />
          <span>Select none</span>
        </div>
        <div className="flex h-[22px] shrink-0 items-center gap-[3px]">
          <SelectIcon fills={[false, true, true, false]} />
          <span className="tracking-[-0.3px]">Invert selection</span>
        </div>
        <span className="pl-[34px] leading-[24px] text-[#555]">Select</span>
      </div>
    </div>
  );
}

function ExplorerWindow() {
  return (
    <div className="absolute top-[14px] left-[283px] flex h-[593px] w-[786px] flex-col border border-[#948b84] bg-white text-[11.5px] tracking-[-0.2px]">
      <div className="flex h-[30px] items-center pr-[17px] pl-[8px]">
        <DownIcon />
        <div className="ml-[7px] h-[14px] w-px bg-[#aaa]" />
        <span className="ml-[9px]"><FileDoc kind="check" /></span>
        <span className="ml-[6px]"><Folder /></span>
        <svg width="8" height="8" viewBox="0 0 8 8" className="ml-[6px]"><path d="M0 1h8" stroke="#111" /><path d="M0 3.500h8L4 7.500z" fill="#111" /></svg>
        <div className="ml-[9px] h-[14px] w-px bg-[#aaa]" />
        <span className="ml-[6px] tracking-[-0.15px] text-[#8a8a8a]">Downloads</span>
        <div className="ml-auto"><CaptionButtons /></div>
      </div>
      <div className="flex h-[23px] text-[#333]">
        <div className="flex w-[56px] items-center justify-center bg-[#0063b1] text-white">File</div>
        <div className="mb-[-1px] flex w-[58px] items-center justify-center border border-b-0 border-[#dadbdc] bg-[#f5f6f7] pb-px">Home</div>
        <div className="flex w-[59px] items-center justify-center">Share</div>
        <div className="flex w-[52px] items-center justify-center">View</div>
        <div className="ml-auto flex items-center gap-[9px] pr-[3px]">
          <Chevron dir="up" color="#999" />
          <div className="flex h-[16px] w-[16px] items-center justify-center rounded-full bg-[#0a64b4] text-[12px] font-bold text-white">?</div>
        </div>
      </div>
      <Ribbon />
      <div className="flex h-[34px] items-center pr-[13px] pl-[12px]">
        <Arrow />
        <span className="ml-[16px]"><Arrow dir="right" color="#ccc" /></span>
        <span className="ml-[12px]"><Chevron dir="down" color="#777" w={8} /></span>
        <span className="ml-[8px]"><Arrow dir="up" /></span>
        <div className="ml-auto flex h-[22px] w-[205px] items-center justify-between border border-[#d9d9d9] pr-[7px] pl-[12px] text-[#6d6d6d]">
          <span className="tracking-[-0.05px]">Search Downloads</span>
          <svg width="13" height="13" viewBox="0 0 13 13">
            <circle cx="8" cy="5" r="3.5" fill="none" stroke="#666" strokeWidth="1.6" />
            <path d="M5.500 7.500L1 12" stroke="#666" strokeWidth="1.8" />
          </svg>
        </div>
      </div>
      <div className="flex min-h-0 flex-1">
        <div className="flex w-[140px] flex-col overflow-hidden">
          {navItems.map((item, i) => (
            <div
              key={i}
              className={`flex h-[24px] shrink-0 items-center gap-[5px] ${item.deep ? 'pl-[40px]' : 'pl-[32px]'} ${item.selected ? 'bg-[#d9d9d9]' : ''}`}
            >
              {item.icon}
              <span className="pt-px">{item.label}</span>
            </div>
          ))}
        </div>
        <div className="flex w-[16px] items-end justify-center bg-[#f0f0f0] pb-[3px]">
          <Chevron dir="down" />
        </div>
        <div className="flex flex-1 flex-col">
          <div className="mt-px mr-[8px] ml-auto flex h-[25px] w-[82px] items-center border-x border-[#e5e5e5] pl-[7px] text-[#4c607a]">Size</div>
          <div className="mt-[19px] mr-[7px] border-t border-[#e5e5e5]" />
          <div className="mt-[14px] mr-[12px] flex h-[22px] items-center justify-end bg-[#d9d9d9] pr-[4px] text-[#555]">
            <span className="mr-[58px] tracking-[-0.1px]">WinRAR archive</span>
            <span className="tracking-[-0.3px]">6,296 KB</span>
          </div>
          <div className="mt-[16px] mr-[7px] border-t border-[#e5e5e5]" />
          <div className="mt-[14px] flex flex-col pr-[16px] text-[#555]">
            {fileRows.map((row, i) => (
              <div key={i} className="flex h-[21px] items-center justify-end">
                <span>{row.type}</span>
                <span className="w-[142px] text-right">{row.size}</span>
              </div>
            ))}
          </div>
          <div className="mt-auto flex h-[15px] bg-[#f0f0f0]">
            <div className="flex w-[21px] items-center justify-center"><Chevron dir="left" /></div>
            <div className="flex-1 bg-[#cdcdcd]" />
            <div className="flex w-[18px] items-center justify-center"><Chevron dir="right" /></div>
          </div>
        </div>
      </div>
      <div className="flex h-[24px] items-center pr-[8px] pl-[14px] text-[#29446a]">
        <span className="pt-px">8 items</span>
        <span className="ml-[21px] pt-px">1 item selected</span>
        <span className="ml-[6px] pt-px">6.14 MB</span>
        <div className="ml-auto flex h-[23px] w-[22px] items-center justify-center border border-[#2b8ad0] bg-[#c8e8fb]">
          <svg width="16" height="13" viewBox="0 0 16 13">
            <path d="M.5.5h4v12h-4zM.5 4.500h4M.5 8.500h4" fill="#fff" stroke="#777" />
            <path d="M6 2.500h4M12 2.500h4M6 6.500h4M12 6.500h4M6 10.500h4M12 10.500h4" stroke="#555" />
          </svg>
        </div>
        <svg width="14" height="11" viewBox="0 0 14 11" className="ml-[4px]">
          <rect x=".5" y=".5" width="13" height="10" fill="#fff" stroke="#999" />
          <rect x="2" y="2" width="10" height="7" fill="#8fb8ee" />
          <path d="M2 5c4 0 5 2 10 2v2H2z" fill="#27485e" />
        </svg>
      </div>
    </div>
  );
}

/* ---------- Extraction dialog ---------- */

function DialogButton({ children, className }: { children: ReactNode; className: string }) {
  return (
    <button className={`flex h-[21px] items-center justify-center border bg-[#e1e1e1] ${className}`}>
      <span className="pt-px pr-[2px]">{children}</span>
    </button>
  );
}

function Group({ title, className, children }: { title: string; className: string; children: ReactNode }) {
  return (
    <fieldset className={`border border-[#dcdcdc] pl-[9px] ${className}`}>
      <legend className="ml-[-4px] h-[16px] px-[3px] leading-[16px]">{title}</legend>
      {children}
    </fieldset>
  );
}

function Radio({ label, checked }: { label: string; checked?: boolean }) {
  return (
    <div className="flex h-[19.5px] items-center gap-[2px]">
      <span className="flex h-[13px] w-[13px] items-center justify-center rounded-full border border-[#333] bg-white">
        {checked && <span className="h-[7px] w-[7px] rounded-full bg-[#222]" />}
      </span>
      <span>{label}</span>
    </div>
  );
}

function Check({ label, disabled }: { label: string; disabled?: boolean }) {
  return (
    <div className={`flex h-[19.5px] items-center gap-[2px] ${disabled ? 'text-[#838383]' : ''}`}>
      <span className={`h-[13px] w-[13px] border bg-white ${disabled ? 'border-[#ccc]' : 'border-[#333]'}`} />
      <span>{label}</span>
    </div>
  );
}

const treeItems = [
  { label: 'OneDrive', icon: <OneDriveIcon />, level: 1 },
  { label: 'admin', icon: <UserIcon />, level: 1 },
  { label: 'This PC', icon: <PcIcon />, level: 1, open: true },
  { label: '3D Objects', icon: <CubeIcon />, level: 2 },
  { label: 'Desktop', icon: <DesktopIcon />, level: 2 },
  { label: 'Documents', icon: <FileDoc kind="text" />, level: 2 },
  { label: 'Downloads', icon: <DownIcon />, level: 2 },
  { label: 'Music', icon: <MusicIcon />, level: 2 },
  { label: 'Pictures', icon: <PictureIcon />, level: 2 },
  { label: 'Videos', icon: <VideoIcon />, level: 2 },
  { label: 'Local Disk (C:)', icon: <DiskIcon />, level: 2 },
  { label: 'Libraries', icon: <LibraryIcon />, level: 1 },
  { label: 'Network', icon: <NetworkIcon />, level: 1 },
];

function Expander({ open }: { open?: boolean }) {
  return (
    <svg width="15" height="16" viewBox="0 0 15 16" className="shrink-0">
      <path d="M4.500 0v16M9 8.500h6" stroke="#888" strokeDasharray="1 1" />
      <rect x=".5" y="4.5" width="8" height="8" fill="#fff" stroke="#919191" />
      <path d={open ? 'M2 8.500h5' : 'M2 8.500h5M4.500 6v5'} stroke="#2b3a78" />
    </svg>
  );
}

function FolderTree() {
  return (
    <div className="mt-[11px] ml-[11px] h-[304px] w-[246px] border border-[#7a7d85] pt-px pl-[4px]">
      <div className="flex h-[16px] items-center gap-[4px]">
        <DesktopIcon />
        <span>Desktop</span>
      </div>
      {treeItems.map((item) => (
        <div key={`${item.level}-${item.label}`} className="flex h-[16px] items-center pl-[4px]">
          {item.level === 2 && (
            <svg width="19" height="16" viewBox="0 0 19 16" className="shrink-0"><path d="M4.500 0v16" stroke="#888" strokeDasharray="1 1" /></svg>
          )}
          <Expander open={item.open} />
          <span className="flex w-[20px] shrink-0">{item.icon}</span>
          <span>{item.label}</span>
        </div>
      ))}
    </div>
  );
}

function ExtractDialog() {
  return (
    <div className="absolute top-[104px] left-[374px] flex h-[470px] w-[532px] flex-col border border-[#555] bg-[#f0f0f0] text-[11px] tracking-[-0.28px] text-black">
      <div className="flex h-[24px] items-center bg-white pr-[17px] pl-[3px]">
        <RarIcon />
        <span className="ml-[5px] text-[11.5px] tracking-[-0.13px]">Extraction path and options</span>
        <span className="mr-[36px] ml-auto text-[13px]">?</span>
        <svg width="12" height="12" viewBox="0 0 12 12"><path d="M1 1l10 10M11 1L1 11" stroke="#222" strokeWidth="1.2" /></svg>
      </div>
      <div className="flex h-[28px] items-end border-t border-white pl-[6px]">
        <div className="mb-[-1px] flex h-[21px] w-[52px] items-center justify-center border border-b-0 border-[#dcdcdc] bg-white pb-[2px] tracking-[-0.3px]">General</div>
        <div className="flex h-[18px] w-[57px] items-center justify-center border border-b-0 border-l-0 border-[#d5d5d5] tracking-[-0.3px]">Advanced</div>
      </div>
      <div className="ml-[6px] h-[378px] w-[516px] border border-[#dcdcdc] bg-white pl-[11px]">
        <div className="flex h-[52px]">
          <div className="w-[387px] pt-[10px]">
            <div className="ml-[-1px] h-[20px] leading-[18px]">Destination path (will be created if does not exist)</div>
            <div className="flex h-[21px] items-center justify-between border border-[#0067b8] pr-[3px] pl-[5px]">
              <span className="bg-[#0078d7] leading-[13px] tracking-[-0.45px] text-white">C:\Users\admin\Downloads\NLHybrid-4272025</span>
              <Chevron dir="down" color="#555" />
            </div>
          </div>
          <div className="ml-[14px] flex flex-col gap-[3px] pt-[7px]">
            <DialogButton className="w-[91px] border-[#adadad]">Display</DialogButton>
            <DialogButton className="w-[91px] border-[#adadad]">New folder</DialogButton>
          </div>
        </div>
        <div className="flex">
          <div className="flex w-[236px] flex-col gap-[5px] pt-[5px]">
            <Group title="Update mode" className="h-[83px]">
              <div className="pt-[3px]">
                <Radio label="Extract and replace files" checked />
                <Radio label="Extract and update files" />
                <Radio label="Fresh existing files only" />
              </div>
            </Group>
            <Group title="Overwrite mode" className="h-[102px]">
              <div className="pt-[3px] tracking-[-0.38px]">
                <Radio label="Ask before overwrite" checked />
                <Radio label="Overwrite without prompt" />
                <Radio label="Skip existing files" />
                <Radio label="Rename automatically" />
              </div>
            </Group>
            <Group title="Miscellaneous" className="h-[83px]">
              <div className="pt-[4px] tracking-[-0.34px]">
                <Check label="Extract archives to subfolders" disabled />
                <Check label="Keep broken files" />
                <Check label="Display files in Explorer" />
              </div>
            </Group>
            <DialogButton className="mt-[3px] ml-px w-[234px] border-[#adadad]">Save settings</DialogButton>
          </div>
          <FolderTree />
        </div>
      </div>
      <div className="mt-[9px] flex justify-end gap-[8px] pr-[7px]">
        <DialogButton className="w-[73px] border-2 border-[#0078d7]">OK</DialogButton>
        <DialogButton className="w-[73px] border-[#adadad]">Cancel</DialogButton>
        <DialogButton className="w-[73px] border-[#adadad]">Help</DialogButton>
      </div>
    </div>
  );
}

/* ---------- Taskbar ---------- */

function TaskButton({ running, active, children }: { running?: boolean; active?: boolean; children: ReactNode }) {
  return (
    <div className={`flex h-full w-[49px] justify-center ${active ? 'bg-[#3b4a52]' : ''}`}>
      <div className={`flex h-full items-center justify-center border-b-2 ${active ? 'w-[49px]' : 'w-[40px]'} ${running ? 'border-[#76b9ed]' : 'border-transparent'}`}>{children}</div>
    </div>
  );
}

function Taskbar() {
  return (
    <div className="flex h-[40px] items-center bg-linear-to-r from-[#00141c] to-[#030d1b] text-white">
      <div className="flex w-[48px] justify-center">
        <svg width="16" height="16" viewBox="0 0 16 16"><path d="M0 2.200L7 1.200V7.500H0zM8 1l8-1v7.500H8zM0 8.500h7v6.300l-7-1zM8 8.500h8V16l-8-1z" fill="#fff" /></svg>
      </div>
      <div className="flex h-full w-[288px] items-center gap-[11px] border border-[#c8c8c8] bg-[#f2f2f2] pl-[11px] text-[#444]">
        <svg width="17" height="17" viewBox="0 0 17 17">
          <circle cx="10.5" cy="6.5" r="5" fill="none" stroke="#222" strokeWidth="1.3" />
          <path d="M7 10.500L1 16" stroke="#222" strokeWidth="1.4" />
        </svg>
        <span className="text-[14px] tracking-[-0.05px]">Type here to search</span>
      </div>
      <div className="ml-px flex h-full">
        <TaskButton>
          <svg width="18" height="18" viewBox="0 0 18 18" className="mr-px">
            <path d="M1.500 5.500h10v7h-10zM1.500 3V.5M11.500 3V.5M1.500 15v2.500M11.500 15v2.500M2 2.500h9M2 15.500h9M15.500 1v3M15.500 8v9" fill="none" stroke="#fff" strokeWidth="1.2" />
            <path d="M14 5h3v3h-3z" fill="#fff" />
          </svg>
        </TaskButton>
        <TaskButton><Edge /></TaskButton>
        <TaskButton running><LibraryIcon s={22} /></TaskButton>
        <TaskButton><FirefoxIcon s={24} /></TaskButton>
        <TaskButton running><FileZillaIcon s={23} /></TaskButton>
        <TaskButton running><Gear /></TaskButton>
        <TaskButton running active><RarIcon s={24} /></TaskButton>
      </div>
      <div className="ml-auto flex items-center">
        <Chevron dir="up" color="#fff" w={13} />
        <svg width="14" height="16" viewBox="0 0 14 16" className="ml-[12px]" fill="none" stroke="#fff" strokeWidth="1.2">
          <rect x="2" y="5" width="7" height="7" rx="1" />
          <path d="M9 7.500l2.500-1.500v5L9 9.500M3 2.500Q6 0 9 2.500M3 14q3 2.500 6 0" />
        </svg>
        <svg width="17" height="15" viewBox="0 0 17 15" className="ml-[8px]" fill="none" stroke="#fff" strokeWidth="1.2">
          <path d="M5 2.500h11v8H5zM10.500 10.500v3M7 13.500h7M.6.6h4v4h-4zM2.500 5v8.500" />
        </svg>
        <svg width="18" height="14" viewBox="0 0 18 14" className="ml-[7px]" fill="none" stroke="#fff" strokeWidth="1.2">
          <path d="M1 5v4h2.500L7 12V2L3.500 5zM9.500 5q1.500 2 0 4M11.500 3q3 4 0 8M14 1q4.500 6 0 12" />
        </svg>
        <div className="ml-[7px] w-[56px] text-center text-[11.5px] leading-[18px] tracking-[-0.2px] whitespace-nowrap">
          <p>2:24 AM</p>
          <p>4/29/2025</p>
        </div>
        <svg width="18" height="17" viewBox="0 0 18 17" className="ml-[15px]"><path d="M1 1.500h15.500v11H12l-3 3-3-3H1z" fill="none" stroke="#fff" strokeWidth="1.3" /></svg>
        <div className="ml-[18px] h-[40px] w-[6px] border-l border-[#4a525c]" />
      </div>
    </div>
  );
}

export default function App() {
  return (
    <div className="relative flex h-[720px] w-[1280px] flex-col overflow-hidden bg-linear-to-r from-[#00adff] via-[#0078e0] to-[#003fb8] font-['Noto_Sans','Open_Sans',sans-serif]">
      <div className="h-[680px]">
        <DesktopShortcuts />
        <FileZillaWindow />
        <SettingsWindow />
        <WinRarWindow />
        <ExplorerWindow />
        <ExtractDialog />
        <Watermark />
      </div>
      <Taskbar />
    </div>
  );
}
